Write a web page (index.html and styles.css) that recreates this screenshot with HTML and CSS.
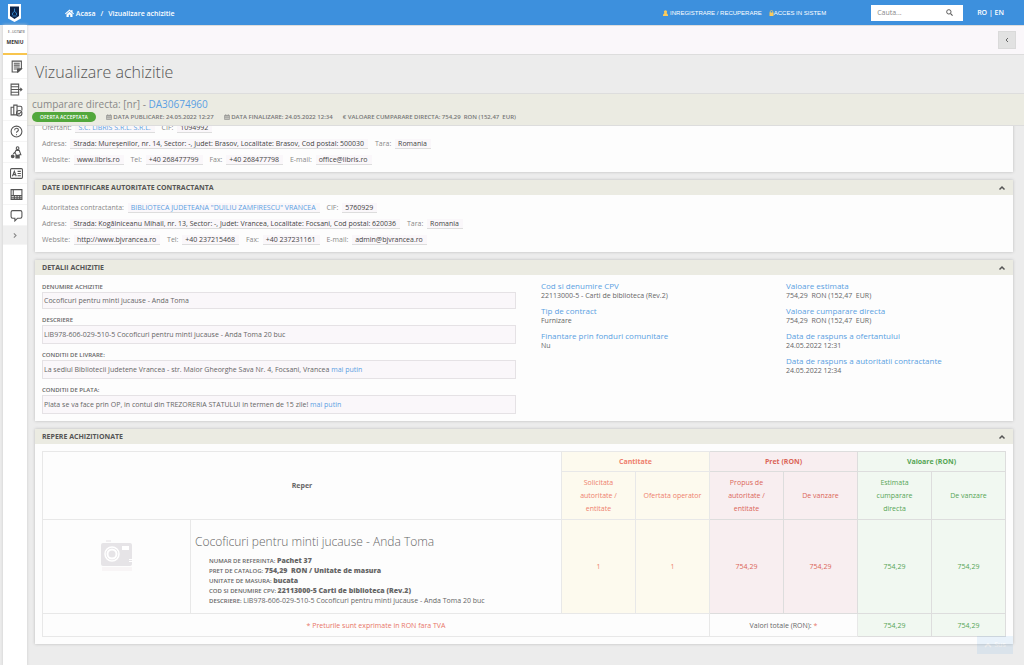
FILE: index.html
```html
<!DOCTYPE html>
<html lang="ro">
<head>
  <meta charset="UTF-8">
  <meta name="viewport" content="width=device-width, initial-scale=1.0">
  <title>Vizualizare achizitie</title>
  <link rel="stylesheet" href="styles.css">
</head>
<body>
  <header class="topbar">
    <a href="#" class="logo" aria-label="SEAP">
      <svg width="13" height="18" viewBox="0 0 26 36">
        <path d="M0 0h26v29L13 36L0 29z" fill="#fff"/>
        <path d="M4 5h18v19L13 30L4 24z" fill="#0b2348"/>
        <path d="M13 9v7M9 22v-4l4-3 4 3v4M9 24h8" stroke="#2d7fc4" stroke-width="2" fill="none"/>
      </svg>
    </a>
    <nav class="breadcrumb">
      <a href="#"><svg width="9" height="8" viewBox="0 0 18 16"><path d="M9 1L0 9l1.500 1.500L9 4l7.500 6.500L18 9l-3-2.700V2h-2.500v2zM9 5.500L3 10.500V16h4.500v-4.500h3V16H15v-5.500z" fill="#fff"/></svg> Acasa</a>
      <span>/</span>
      <a href="#">Vizualizare achizitie</a>
    </nav>
    <nav class="account">
      <a href="#"><svg width="5" height="6" viewBox="0 0 10 12"><circle cx="5" cy="3.500" r="3.200"/><path d="M0 12V9l3-3h4l3 3v3z"/></svg> INREGISTRARE / RECUPERARE</a>
      <a href="#"><svg width="5" height="6" viewBox="0 0 10 12"><path d="M1 5h8v7H1z"/><path d="M2.500 6V3.500a2.500 2.500 0 0 1 5 0V6" fill="none" stroke="#fbcb5b" stroke-width="1.500"/></svg>ACCES IN SISTEM</a>
    </nav>
    <form class="search">
      <input type="text" placeholder="Cauta..." aria-label="Cauta">
      <button type="button" aria-label="Cauta"><svg width="7" height="7" viewBox="0 0 16 16"><circle cx="6.500" cy="6.500" r="5" fill="none" stroke="#555" stroke-width="2.200"/><path d="M10.500 10.500L15 15" stroke="#555" stroke-width="2.600"/></svg></button>
    </form>
    <div class="lang"><a href="#">RO</a> | <a href="#">EN</a></div>
  </header>

  <div class="layout">
    <aside class="sidebar">
      <div class="menu-head"><small>E - LICITATIE</small><strong>MENIU</strong></div>
      <a href="#" aria-label="Anunturi"><svg viewBox="0 0 24 24"><path d="M4 2h17v14l-6 6H4z"/><path d="M7 6h11M7 9.500h11M7 13h11M7 16.500h6"/><path d="M14 22v-6h7z" fill="#555"/></svg></a>
      <a href="#" aria-label="Proceduri"><svg viewBox="0 0 24 24"><path d="M2 2h14v5H2zM2 7h14v5H2zM2 12h14v5H2zM2 17h14v5H2zM12 12h9M19 9l3 3-3 3"/></svg></a>
      <a href="#" aria-label="Achizitii"><svg viewBox="0 0 24 24"><path d="M8 20H2V6h5M7 2h6v18H7zM13 4h6q3 0 3 3v5"/><circle cx="17" cy="17" r="5"/><path d="M14.500 17l2 2 3.500-4"/></svg></a>
      <a href="#" aria-label="Ajutor"><svg viewBox="0 0 24 24"><circle cx="12" cy="12" r="10"/><path d="M8.500 9.500c0-5 7-4.500 7-.5 0 2.500-3.500 2.500-3.500 5.500M12 17v2"/></svg></a>
      <a href="#" aria-label="Operatori"><svg viewBox="0 0 24 24"><circle cx="14" cy="4" r="2.500"/><path d="M11 8h6l3 8h-3v6h-2v-5h-2v5h-2v-7l-2-2z"/><path d="M9 11l-3 4"/><circle cx="5" cy="19" r="2.500" fill="#555"/></svg></a>
      <a href="#" aria-label="Contact"><svg viewBox="0 0 24 24"><rect x="1" y="3" width="22" height="18" rx="2"/><path d="M4.500 17l3.500-9 3.500 9M5.500 14h5M14 8h6M14 12h6M14 16h6"/></svg></a>
      <a href="#" aria-label="Rapoarte"><svg viewBox="0 0 24 24"><path d="M2 3h20v18H2zM2 14h20M6 3v11M2 18h20M8 14v7M13 14v7M18 14v7"/></svg></a>
      <a href="#" aria-label="Mesaje"><svg viewBox="0 0 24 24"><path d="M5 3h14q3 0 3 3v8q0 3-3 3h-5l-5 5v-5H5q-3 0-3-3V6q0-3 3-3z"/></svg></a>
      <button type="button" class="expand" aria-label="Extinde meniul"><svg viewBox="0 0 24 24"><path d="M9 8l4 4-4 4"/></svg></button>
    </aside>

    <main class="content">
      <div class="toolbar"><button type="button" aria-label="Inapoi"><svg width="6" height="8" viewBox="0 0 12 16"><path d="M8 4L4 8l4 4" fill="none" stroke="#666" stroke-width="2"/></svg></button></div>
      <h1>Vizualizare achizitie</h1>

      <section class="summary">
        <h2>cumparare directa: [nr] - <a href="#">DA30674960</a></h2>
        <div class="summary-info">
          <span class="badge">OFERTA ACCEPTATA</span>
          <span><svg width="6" height="6" viewBox="0 0 12 12"><path d="M1 3h10v8H1zM1 4h10M4 4v7M8 4v7M1 7.500h10M3.500 0v3M8.500 0v3"/></svg> DATA PUBLICARE: 24.05.2022 12:27</span>
          <span><svg width="6" height="6" viewBox="0 0 12 12"><path d="M1 3h10v8H1zM1 4h10M4 4v7M8 4v7M1 7.500h10M3.500 0v3M8.500 0v3"/></svg> DATA FINALIZARE: 24.05.2022 12:34</span>
          <span>€ VALOARE CUMPARARE DIRECTA: 754,29 &nbsp;RON (152,47 &nbsp;EUR)</span>
        </div>
      </section>

      <div class="panels">
        <section class="panel supplier">
          <div class="info">
            <p>Ofertant: <a href="#">S.C. LIBRIS S.R.L. S.R.L.</a> CIF: <b>1094992</b></p>
            <p>Adresa: <b>Strada: Mureşenilor, nr. 14, Sector: -, Judet: Brasov, Localitate: Brasov, Cod postal: 500030</b> Tara: <b>Romania</b></p>
            <p>Website: <b>www.libris.ro</b> Tel: <b>+40 268477799</b> Fax: <b>+40 268477798</b> E-mail: <b>office@libris.ro</b></p>
          </div>
        </section>

        <section class="panel">
          <h3>DATE IDENTIFICARE AUTORITATE CONTRACTANTA <button type="button" aria-label="Restrange"><svg width="8" height="6" viewBox="0 0 16 12"><path d="M3 9l5-5 5 5"/></svg></button></h3>
          <div class="info">
            <p>Autoritatea contractanta: <a href="#">BIBLIOTECA JUDETEANA "DUILIU ZAMFIRESCU" VRANCEA</a> CIF: <b>5760929</b></p>
            <p>Adresa: <b>Strada: Kogălniceanu Mihail, nr. 13, Sector: -, Judet: Vrancea, Localitate: Focsani, Cod postal: 620036</b> Tara: <b>Romania</b></p>
            <p>Website: <b>http://www.bjvrancea.ro</b> Tel: <b>+40 237215468</b> Fax: <b>+40 237231161</b> E-mail: <b>admin@bjvrancea.ro</b></p>
          </div>
        </section>

        <section class="panel">
          <h3>DETALII ACHIZITIE <button type="button" aria-label="Restrange"><svg width="8" height="6" viewBox="0 0 16 12"><path d="M3 9l5-5 5 5"/></svg></button></h3>
          <div class="details">
            <div class="fields">
              <h4>DENUMIRE ACHIZITIE</h4>
              <p class="short">Cocoficuri pentru minti jucause - Anda Toma</p>
              <h4>DESCRIERE</h4>
              <p>LIB978-606-029-510-5 Cocoficuri pentru minti jucause - Anda Toma 20 buc</p>
              <h4>CONDITII DE LIVRARE:</h4>
              <p>La sediul Bibliotecii Judetene Vrancea - str. Maior Gheorghe Sava Nr. 4, Focsani, Vrancea <a href="#">mai putin</a></p>
              <h4>CONDITII DE PLATA:</h4>
              <p>Plata se va face prin OP, in contul din TREZORERIA STATULUI in termen de 15 zile! <a href="#">mai putin</a></p>
            </div>
            <dl>
              <dt>Cod si denumire CPV</dt>
              <dd>22113000-5 - Carti de biblioteca (Rev.2)</dd>
              <dt>Tip de contract</dt>
              <dd>Furnizare</dd>
              <dt>Finantare prin fonduri comunitare</dt>
              <dd>Nu</dd>
            </dl>
            <dl>
              <dt>Valoare estimata</dt>
              <dd>754,29 &nbsp;RON (152,47 &nbsp;EUR)</dd>
              <dt>Valoare cumparare directa</dt>
              <dd>754,29 &nbsp;RON (152,47 &nbsp;EUR)</dd>
              <dt>Data de raspuns a ofertantului</dt>
              <dd>24.05.2022 12:31</dd>
              <dt>Data de raspuns a autoritatii contractante</dt>
              <dd>24.05.2022 12:34</dd>
            </dl>
          </div>
        </section>

        <section class="panel">
          <h3>REPERE ACHIZITIONATE <button type="button" aria-label="Restrange"><svg width="8" height="6" viewBox="0 0 16 12"><path d="M3 9l5-5 5 5"/></svg></button></h3>
          <div class="table-wrap">
            <table>
              <colgroup><col class="col"><col><col class="col"><col class="col"><col class="col"><col class="col"><col class="col"><col class="col"></colgroup>
              <thead>
                <tr class="groups">
                  <th colspan="2" rowspan="2">Reper</th>
                  <th colspan="2" class="qty">Cantitate</th>
                  <th colspan="2" class="price">Pret (RON)</th>
                  <th colspan="2" class="value">Valoare (RON)</th>
                </tr>
                <tr class="subs">
                  <th class="qty">Solicitata autoritate / entitate</th>
                  <th class="qty">Ofertata operator</th>
                  <th class="price">Propus de autoritate / entitate</th>
                  <th class="price">De vanzare</th>
                  <th class="value">Estimata cumparare directa</th>
                  <th class="value">De vanzare</th>
                </tr>
              </thead>
              <tbody>
                <tr class="item">
                  <td class="photo">
                    <svg width="34" height="34" viewBox="0 0 34 34">
                      <path d="M6 0h5v2H6z" fill="#f1eff1"/>
                      <rect x="1" y="3" width="31" height="23" rx="2" fill="#e6e4e7"/>
                      <circle cx="12" cy="14" r="7" fill="none" stroke="#fff" stroke-width="1.500"/>
                      <circle cx="12" cy="14" r="4.500" fill="none" stroke="#fff" stroke-width="2"/>
                      <path d="M22 6h7v4h-7zM29 19h4v1h-4zM29 21h4v1h-4z" fill="#fff"/>
                      <path d="M2 27h30v4H2z" fill="#f8f5f6"/>
                    </svg>
                  </td>
                  <td class="product">
                    <h5>Cocoficuri pentru minti jucause - Anda Toma</h5>
                    <ul>
                      <li>NUMAR DE REFERINTA: <strong>Pachet 37</strong></li>
                      <li>PRET DE CATALOG: <strong>754,29 &nbsp;RON / Unitate de masura</strong></li>
                      <li>UNITATE DE MASURA: <strong>bucata</strong></li>
                      <li>COD SI DENUMIRE CPV: <strong>22113000-5 Carti de biblioteca (Rev.2)</strong></li>
                      <li>DESCRIERE: <span>LIB978-606-029-510-5 Cocoficuri pentru minti jucause - Anda Toma 20 buc</span></li>
                    </ul>
                  </td>
                  <td class="qty">1</td>
                  <td class="qty">1</td>
                  <td class="price">754,29</td>
                  <td class="price">754,29</td>
                  <td class="value">754,29</td>
                  <td class="value">754,29</td>
                </tr>
                <tr class="total">
                  <td colspan="4" class="note">* Preturile sunt exprimate in RON fara TVA</td>
                  <td colspan="2">Valori totale (RON): <span class="note">*</span></td>
                  <td class="value">754,29</td>
                  <td class="value">754,29</td>
                </tr>
              </tbody>
            </table>
          </div>
        </section>
      </div>
    </main>
  </div>
  <a href="#" class="go-top"><svg width="8" height="6" viewBox="0 0 16 12"><path d="M2 10l6-6 6 6" fill="none" stroke="#fff" stroke-width="3"/></svg> Sus</a>
</body>
</html>
```
FILE: styles.css
```css
* { box-sizing: border-box; }
body {
  margin: 0;
  min-height: 100vh;
  display: flex;
  flex-direction: column;
  font-family: "Open Sans", sans-serif;
  font-size: 7px;
  line-height: 10px;
  color: #666;
  background: #ececec;
}
h1, h2, h3, h4, h5, p, ul, dl, dd { margin: 0; padding: 0; }
a { color: #5a9fe2; text-decoration: none; }
button { display: flex; align-items: center; justify-content: center; padding: 0; border: 0; background: none; cursor: pointer; }

.topbar { display: flex; align-items: center; height: 25px; background: #3d90dd; color: #fff; font-weight: 600; }
.topbar a { color: #fff; }
.logo { display: flex; margin-left: 8px; }
.breadcrumb { display: flex; gap: 5px; margin-left: 44px; margin-right: auto; padding-top: 2px; }
.breadcrumb svg { vertical-align: -1px; }
.account { display: flex; gap: 7px; font-family: "Liberation Sans", sans-serif; font-size: 6px; font-weight: 400; }
.account svg { fill: #fbcb5b; vertical-align: -1px; }
.search { display: flex; width: 92px; height: 16px; margin-left: 45px; background: #fff; }
.search input { flex: 1; min-width: 0; padding: 0 6px; border: 0; background: none; font: inherit; font-weight: 400; color: #666; }
.search input::placeholder { color: #888; }
.search button { width: 28px; }
.lang { margin: 0 20px 0 14px; }

.layout { display: flex; flex: 1; }
.sidebar { width: 24px; margin-left: 3px; background: #fff; box-shadow: 0 0 3px #ccc; z-index: 2; }
.menu-head { display: flex; flex-direction: column; height: 30px; padding-top: 4px; border-bottom: 2px solid #f8c54e; text-align: center; color: #333; }
.menu-head small { padding-left: 3px; font-size: 3px; line-height: 6px; white-space: nowrap; }
.menu-head strong { font-size: 5px; line-height: 14px; }
.sidebar a, .expand { display: flex; align-items: center; justify-content: center; height: 21px; width: 100%; border-bottom: 1px solid #f5f5f5; }
.sidebar svg { width: 13px; height: 13px; margin-left: 3px; fill: none; stroke: #555; stroke-width: 2; }
.sidebar .menu-head + a { height: 24px; }
.sidebar .expand { height: 19px; background: #efefef; }
.sidebar .expand svg { margin: 0; stroke: #888; }

.content { flex: 1; min-width: 0; }
.toolbar { display: flex; justify-content: flex-end; align-items: center; height: 30px; padding-right: 8px; background: #faf7fa; border-bottom: 1px solid #ddd; border-top: 1px solid #ddd; }
.toolbar button { width: 18px; height: 18px; background: #e2e2e2; border: 1px solid #dadada; }
h1 { padding-left: 8px; font-size: 16px; line-height: 34px; height: 38px; font-weight: 300; color: #555; }
.summary { position: relative; height: 33px; padding: 3px 5px; background: #ebebe2; border-top: 1px solid #ddd; border-bottom: 1px solid #ddd; }
.summary h2 { font-size: 10px; line-height: 15px; font-weight: 400; color: #888; }
.summary-info { display: flex; align-items: center; gap: 10px; font-size: 6px; font-weight: 600; color: #777; }
.summary svg { fill: none; stroke: #777; stroke-width: 1; vertical-align: -1px; }
.badge { padding: 0 8px; border-radius: 5px; background: #52a83c; color: #fff; font-size: 5px; }

.panels { display: flex; flex-direction: column; gap: 8px; padding: 0 11px 22px 8px; }
.panel { background: #fdfdfd; box-shadow: 0 0 3px #bbb; }
.panel h3 { display: flex; justify-content: space-between; align-items: center; height: 15px; padding: 0 7px; background: #ebebe2; font-size: 7px; font-weight: 700; color: #555; }
.panel h3 svg { fill: none; stroke: #555; stroke-width: 3; }
.info { padding: 5px 7px 4px; }
.info p { height: 16px; line-height: 16px; color: #888; }
.info p > * { margin: 0 5px 0 2px; padding: 0 4px 0 3px; border-bottom: 1px solid #ddd; background: #faf7fa; }
.info b { font-weight: 400; color: #444; }
.supplier { margin-top: -11px; }

.details { display: grid; grid-template-columns: 499fr 245fr 220fr; padding: 6px 7px 0; min-height: 146px; }
.fields { margin-right: 25px; padding-top: 2px; }
.fields h4 { font-size: 6px; line-height: 9px; font-weight: 600; }
.fields p { height: 19px; margin-bottom: 7px; padding: 0 1px; line-height: 17px; border: 1px solid #e5e2e5; background: #faf7fa; }
.fields .short { height: 17px; line-height: 15px; }
.details dt { font-size: 8px; line-height: 10px; color: #5a9fe2; }
.details dd { margin-bottom: 5px; line-height: 10px; }

.table-wrap { padding: 7px; }
table { width: 100%; border-collapse: collapse; table-layout: fixed; text-align: center; line-height: 13px; }
.col { width: 74px; }
th, td { padding: 0 7px; border: 1px solid #e8e8e8; }
.col:first-child { width: 148px; }
.groups { height: 20px; }
.subs { height: 48px; }
.subs th { font-weight: 400; }
.item { height: 94px; }
.total { height: 23px; }
.qty { background: #fdfaee; color: #ee806d; }
.price { background: #f8eef0; color: #db6558; }
.value { background: #f1f8f1; color: #55a555; }
.price, .value { border-color: #ddd; }
.note { color: #e87567; }
.photo { padding-top: 20px; vertical-align: top; }
.product { padding: 4px 4px 0; text-align: left; }
.product h5 { font-size: 12px; line-height: 20px; font-weight: 300; color: #666; }
.product ul { list-style: none; padding: 4px 0 0 14px; font-size: 6px; line-height: 10px; font-weight: 600; }
.product strong, .product span { font-size: 7px; }
.product span { font-weight: 400; }

.go-top { position: fixed; right: 11px; bottom: 11px; display: flex; align-items: center; justify-content: center; gap: 2px; width: 36px; height: 18px; background: #3d90dd; color: #fff; opacity: 0.1; }
```
